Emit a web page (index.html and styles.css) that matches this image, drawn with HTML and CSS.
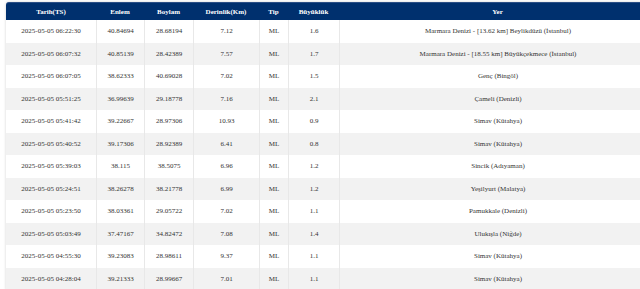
FILE: index.html
```html
<!DOCTYPE html>
<html lang="tr">
<head>
<meta charset="utf-8">
<title>Son Depremler</title>
<link rel="stylesheet" href="styles.css">
</head>
<body>
<table class="quakes">
  <colgroup>
    <col class="c-date"><col class="c-lat"><col class="c-lon"><col class="c-depth"><col class="c-type"><col class="c-mag"><col class="c-place">
  </colgroup>
  <thead>
    <tr><th>Tarih(TS)</th><th>Enlem</th><th>Boylam</th><th>Derinlik(Km)</th><th>Tip</th><th>Büyüklük</th><th>Yer</th></tr>
  </thead>
  <tbody>
    <tr><td>2025-05-05 06:22:30</td><td>40.84694</td><td>28.68194</td><td>7.12</td><td>ML</td><td>1.6</td><td>Marmara Denizi - [13.62 km] Beylikdüzü (İstanbul)</td></tr>
    <tr><td>2025-05-05 06:07:32</td><td>40.85139</td><td>28.42389</td><td>7.57</td><td>ML</td><td>1.7</td><td>Marmara Denizi - [18.55 km] Büyükçekmece (İstanbul)</td></tr>
    <tr><td>2025-05-05 06:07:05</td><td>38.62333</td><td>40.69028</td><td>7.02</td><td>ML</td><td>1.5</td><td>Genç (Bingöl)</td></tr>
    <tr><td>2025-05-05 05:51:25</td><td>36.99639</td><td>29.18778</td><td>7.16</td><td>ML</td><td>2.1</td><td>Çameli (Denizli)</td></tr>
    <tr><td>2025-05-05 05:41:42</td><td>39.22667</td><td>28.97306</td><td>10.93</td><td>ML</td><td>0.9</td><td>Simav (Kütahya)</td></tr>
    <tr><td>2025-05-05 05:40:52</td><td>39.17306</td><td>28.92389</td><td>6.41</td><td>ML</td><td>0.8</td><td>Simav (Kütahya)</td></tr>
    <tr><td>2025-05-05 05:39:03</td><td>38.115</td><td>38.5075</td><td>6.96</td><td>ML</td><td>1.2</td><td>Sincik (Adıyaman)</td></tr>
    <tr><td>2025-05-05 05:24:51</td><td>38.26278</td><td>38.21778</td><td>6.99</td><td>ML</td><td>1.2</td><td>Yeşilyurt (Malatya)</td></tr>
    <tr><td>2025-05-05 05:23:50</td><td>38.03361</td><td>29.05722</td><td>7.02</td><td>ML</td><td>1.1</td><td>Pamukkale (Denizli)</td></tr>
    <tr><td>2025-05-05 05:03:49</td><td>37.47167</td><td>34.82472</td><td>7.08</td><td>ML</td><td>1.4</td><td>Ulukışla (Niğde)</td></tr>
    <tr><td>2025-05-05 04:55:30</td><td>39.23083</td><td>28.98611</td><td>9.37</td><td>ML</td><td>1.1</td><td>Simav (Kütahya)</td></tr>
    <tr><td>2025-05-05 04:28:04</td><td>39.21333</td><td>28.99667</td><td>7.01</td><td>ML</td><td>1.1</td><td>Simav (Kütahya)</td></tr>
  </tbody>
</table>
</body>
</html>
```
FILE: styles.css
```css
html, body {
  overflow: hidden;
}
body {
  margin: 0;
  padding: 2px 0 0 6px;
  background: #ffffff;
  font-family: "Liberation Serif", "Times New Roman", serif;
  color: #333333;
}
.quakes {
  width: 650px;
  table-layout: fixed;
  border-collapse: separate;
  border-spacing: 0;
  font-size: 7px;
  box-shadow: 0 0 3px rgba(0, 0, 0, 0.18);
  border-radius: 3px 3px 0 0;
}
.c-date { width: 90px; }
.c-lat { width: 48px; }
.c-lon { width: 49px; }
.c-depth { width: 66px; }
.c-type { width: 29px; }
.c-mag { width: 51px; }
.c-place { width: 317px; }
.quakes th {
  background: #00306e;
  color: #ffffff;
  font-weight: bold;
  height: 17px;
  padding: 0;
  text-align: center;
  vertical-align: middle;
  border-top: 1px solid #2b4f86;
}
.quakes th:first-child { border-top-left-radius: 3px; }
.quakes th:last-child { border-top-right-radius: 3px; }
.quakes td {
  height: 22.5px;
  padding: 0;
  text-align: center;
  vertical-align: middle;
  border-left: 1px solid #e8e8e8;
  white-space: nowrap;
}
.quakes td:first-child { border-left: none; }
.quakes tbody tr:nth-child(even) td { background: #f2f2f2; }
```
